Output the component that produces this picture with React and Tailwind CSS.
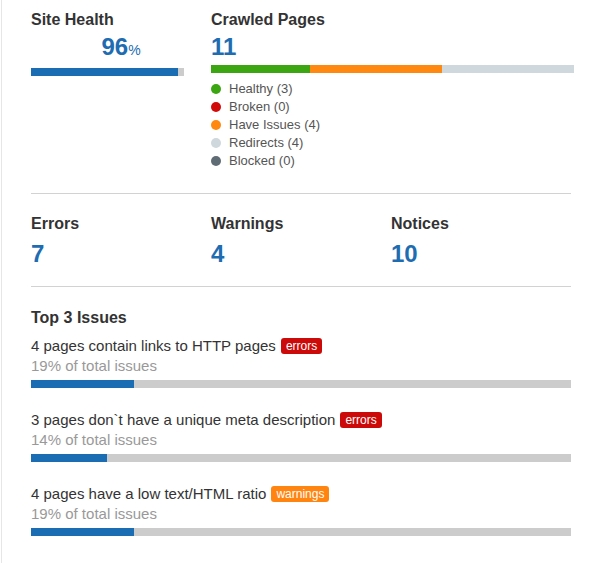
import React from "react";

const BLUE = "bg-[#1b6db3]";

const legend = [
  { label: "Healthy (3)", dot: "bg-[#3ba512]" },
  { label: "Broken (0)", dot: "bg-[#d10a0a]" },
  { label: "Have Issues (4)", dot: "bg-[#ff8811]" },
  { label: "Redirects (4)", dot: "bg-[#cfd8dc]" },
  { label: "Blocked (0)", dot: "bg-[#5f6b75]" },
];

const metrics = [
  { label: "Errors", value: 7 },
  { label: "Warnings", value: 4 },
  { label: "Notices", value: 10 },
];

const issues = [
  { title: "4 pages contain links to HTTP pages", kind: "errors", pct: 19 },
  { title: "3 pages don`t have a unique meta description", kind: "errors", pct: 14 },
  { title: "4 pages have a low text/HTML ratio", kind: "warnings", pct: 19 },
];

function Badge({ kind }) {
  const color = kind === "errors" ? "bg-[#cc0a0a]" : "bg-[#ff8410]";
  return (
    <span
      className={`${color} ml-[5px] inline-block rounded-[3px] px-[5px] text-[12px] leading-[16px] text-white`}
    >
      {kind}
    </span>
  );
}

export default function App() {
  return (
    <div className="min-h-screen bg-white font-['Liberation_Sans',Arial,sans-serif]">
      <div className="ml-px min-h-[563px] border-l border-[#e6e6e6] pl-[29px] pr-[30px] pt-[10px]">
        {/* top row */}
        <div className="flex">
          <div className="w-[180px] shrink-0">
            <h3 className="text-[16px] font-bold leading-[20px] text-[#333]">
              Site Health
            </h3>
            <div className="mt-[3px] text-center text-[24px] font-bold leading-[28px] text-[#1e6cb1]">
              96<span className="text-[14px] font-normal">%</span>
            </div>
            <div className="mt-[4px] flex h-2 w-[153px] bg-[#cccccc]">
              <div className={`${BLUE} h-full w-[147px]`} />
            </div>
          </div>

          <div className="min-w-0 flex-1">
            <h3 className="text-[16px] font-bold leading-[20px] text-[#333]">
              Crawled Pages
            </h3>
            <div className="mt-[3px] text-[24px] font-bold leading-[28px] text-[#1e6cb1]">
              11
            </div>
            <div className="mt-[4px] flex h-2 w-[363px] bg-[#cfd8dc]">
              <div className="h-full w-[99px] bg-[#3ba512]" />
              <div className="h-full w-[132px] bg-[#ff8811]" />
            </div>
            <ul className="mt-[7px] text-[13px] leading-[18px] text-[#555]">
              {legend.map((item) => (
                <li key={item.label} className="flex items-center gap-2">
                  <span className={`${item.dot} h-[10px] w-[10px] rounded-full`} />
                  {item.label}
                </li>
              ))}
            </ul>
          </div>
        </div>

        <div className="mt-[23px] h-px bg-[#d2d2d2]" />

        {/* metrics */}
        <div className="mt-[20px] grid grid-cols-3">
          {metrics.map((m) => (
            <div key={m.label}>
              <div className="text-[16px] font-bold leading-[20px] text-[#333]">
                {m.label}
              </div>
              <div className="mt-[6px] text-[24px] font-bold leading-[28px] text-[#1e6cb1]">
                {m.value}
              </div>
            </div>
          ))}
        </div>

        <div className="mt-[18px] h-px bg-[#d2d2d2]" />

        {/* top issues */}
        <h3 className="mt-[21px] text-[16px] font-bold leading-[20px] text-[#333]">
          Top 3 Issues
        </h3>
        <div className="mt-[8px] flex flex-col gap-[22px]">
          {issues.map((issue, i) => (
            <div key={i}>
              <div className="flex items-center text-[15px] leading-[20px] text-[#333]">
                {issue.title}
                <Badge kind={issue.kind} />
              </div>
              <div className="text-[15px] leading-[20px] text-[#999]">
                {issue.pct}% of total issues
              </div>
              <div className="mt-[4px] h-2 w-full bg-[#cccccc]">
                <div
                  className={`${BLUE} h-full`}
                  style={{ width: `${issue.pct}%` }}
                />
              </div>
            </div>
          ))}
        </div>
      </div>
    </div>
  );
}
